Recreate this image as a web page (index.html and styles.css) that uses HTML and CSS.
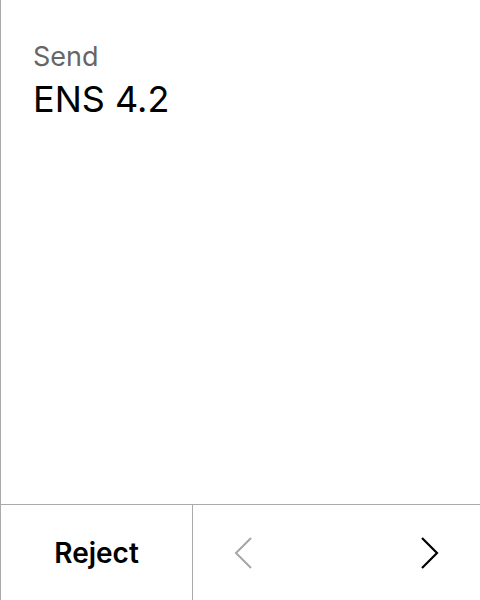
FILE: index.html
```html
<!DOCTYPE html>
<html>
<head>
<meta charset="utf-8">
<link rel="stylesheet" href="styles.css">
</head>
<body>
<div class="screen">
  <div class="content">
    <div class="label">Send</div>
    <div class="amount">ENS 4.2</div>
  </div>
  <div class="actions">
    <button class="reject">Reject</button>
    <div class="nav">
      <button class="arrow prev" aria-label="Previous">
        <svg width="20" height="34" viewBox="0 0 20 34"><polyline points="18,2 3,17 18,32" fill="none" stroke="#a6a6a6" stroke-width="2"/></svg>
      </button>
      <button class="arrow next" aria-label="Next">
        <svg width="20" height="34" viewBox="0 0 20 34"><polyline points="2,2 17,17 2,32" fill="none" stroke="#000" stroke-width="2.2"/></svg>
      </button>
    </div>
  </div>
</div>
</body>
</html>
```
FILE: styles.css
```css
* { box-sizing: border-box; }
html, body { margin: 0; padding: 0; background: #fff; }
body { font-family: Inter, "Noto Sans", sans-serif; }
.screen {
  width: 480px;
  height: 600px;
  display: flex;
  flex-direction: column;
  border-left: 1px solid #aaaaaa;
}
.content {
  flex: 1;
  padding: 41px 0 0 32px;
}
.label {
  font-size: 27px;
  line-height: 32px;
  color: #666666;
}
.amount {
  font-size: 36px;
  line-height: 44px;
  color: #000;
  margin-top: 4px;
}
.actions {
  height: 96px;
  border-top: 1px solid #aaaaaa;
  display: flex;
}
button {
  font-family: inherit;
  background: none;
  border: none;
  padding: 0;
  margin: 0;
}
.reject {
  width: 192px;
  border-right: 1px solid #aaaaaa;
  font-size: 28px;
  font-weight: 600;
  color: #000;
}
.nav {
  flex: 1;
  display: flex;
  justify-content: space-between;
  align-items: center;
  padding: 0 40px 0 40px;
}
.arrow {
  width: 20px;
  height: 34px;
  display: flex;
}
```
